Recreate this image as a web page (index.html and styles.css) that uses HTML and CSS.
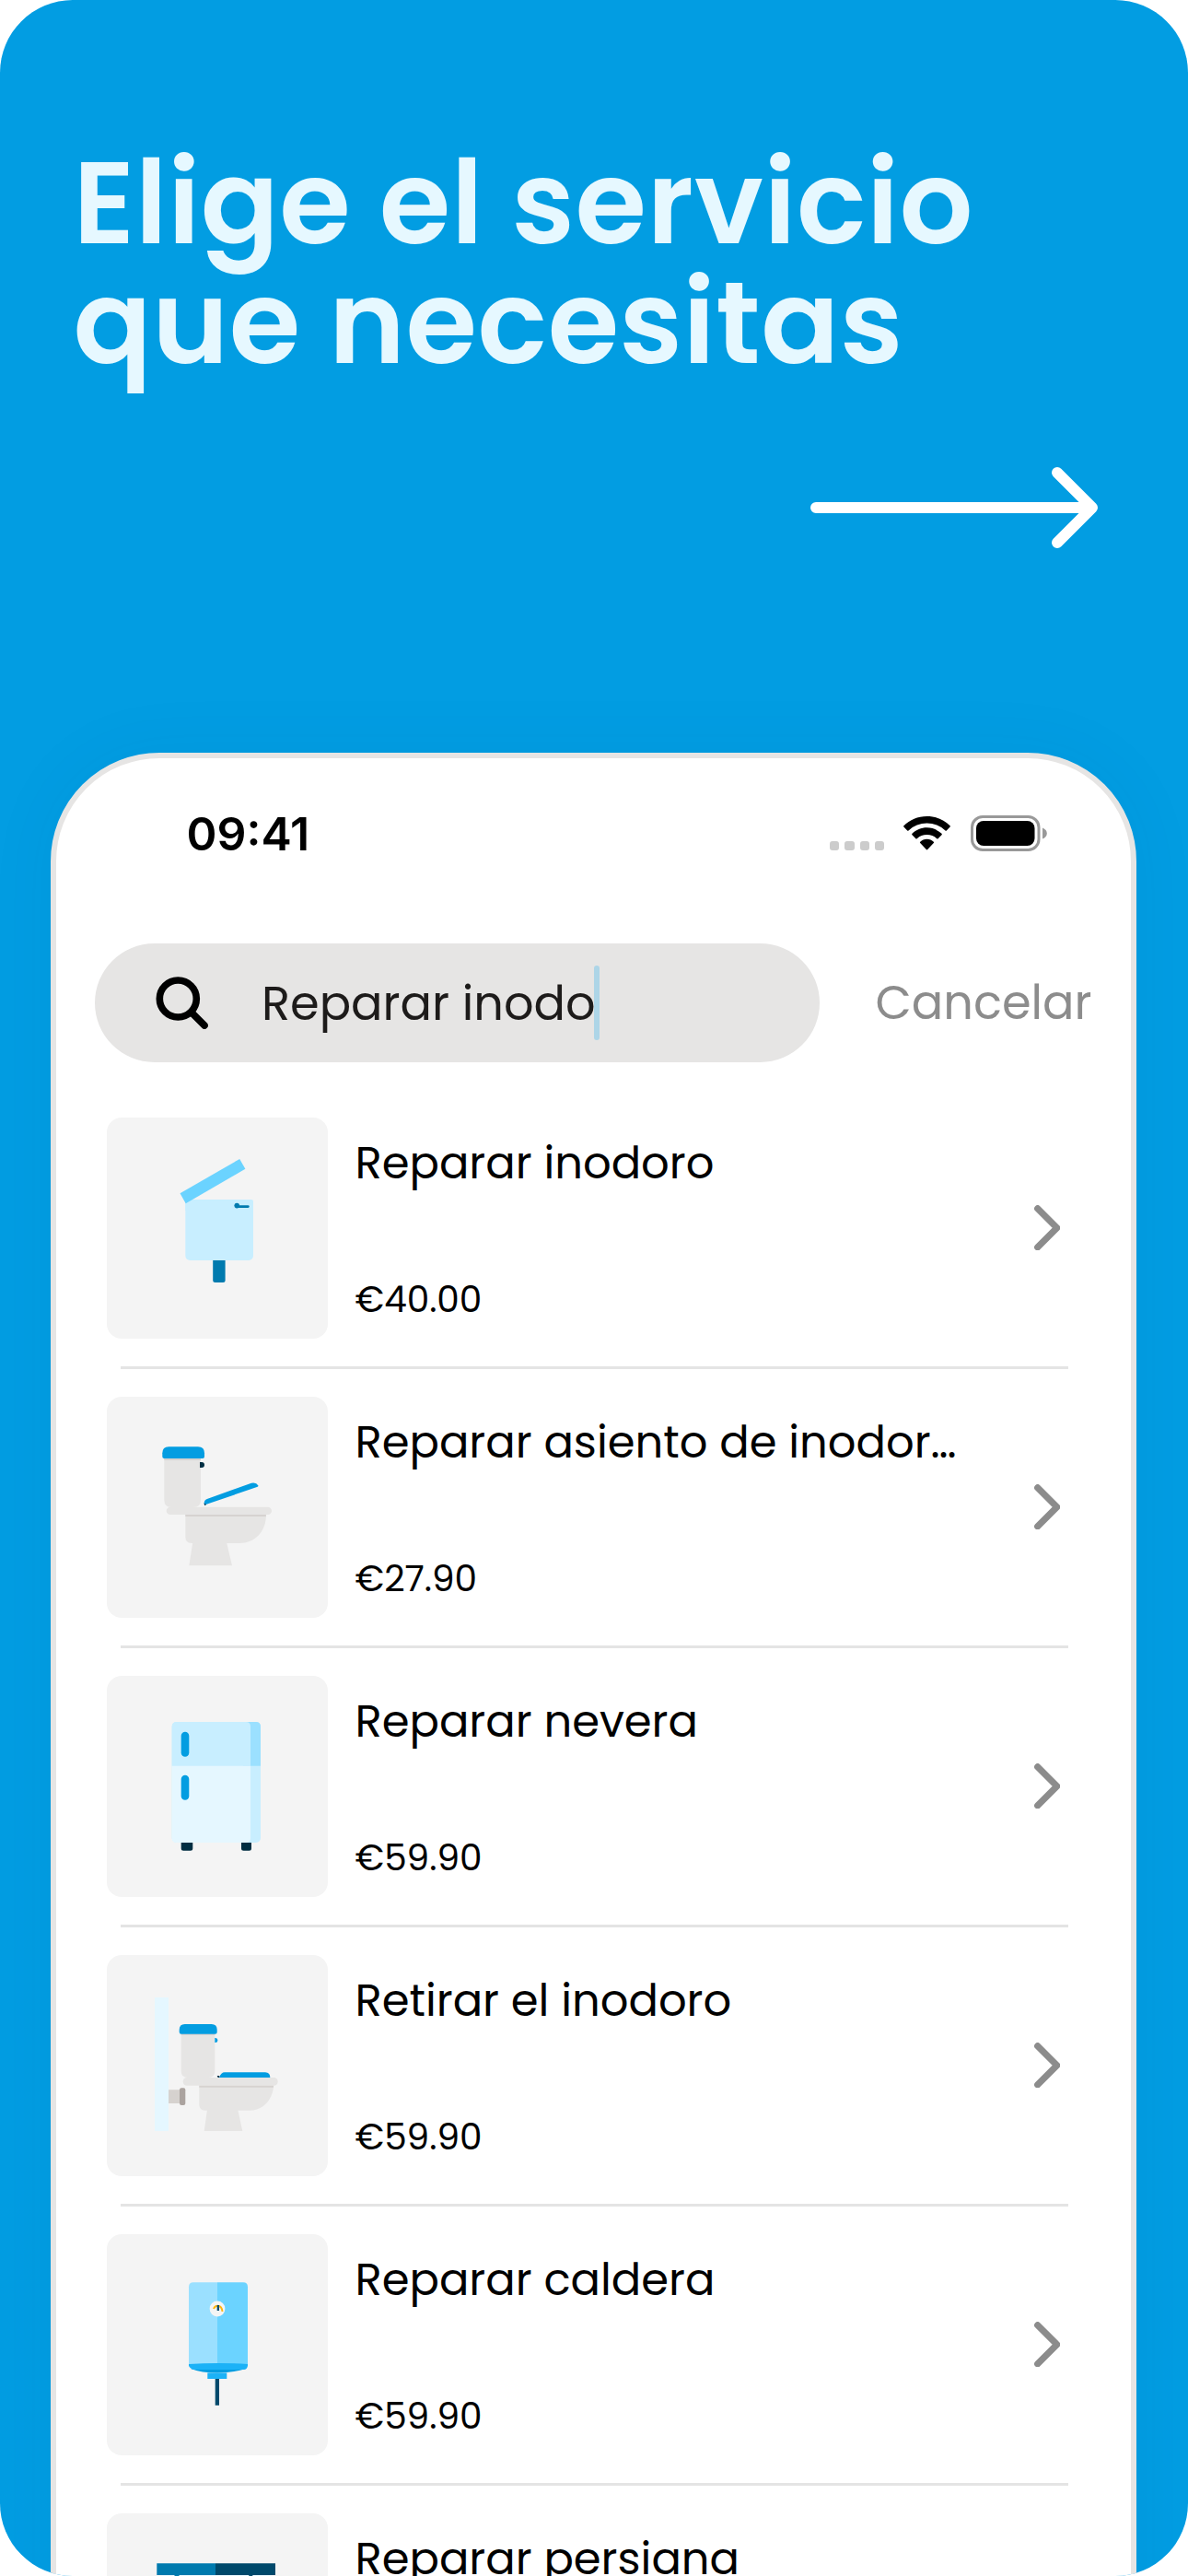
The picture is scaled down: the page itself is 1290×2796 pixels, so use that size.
FILE: index.html
```html
<!DOCTYPE html>
<html lang="es">
<head>
<meta charset="utf-8">
<title>Elige el servicio que necesitas</title>
<link rel="stylesheet" href="styles.css">
</head>
<body>
<main class="poster">
  <h1 class="headline">Elige el servicio<br>que necesitas</h1>
  <svg class="arrow" width="312" height="88" viewBox="0 0 312 88"><path d="M6 44H306M268 6l38 38-38 38"/></svg>

  <section class="phone">
    <header class="status">
      <span class="time">09:41</span>
      <div class="status-icons">
        <div class="dots"><i></i><i></i><i></i><i></i></div>
        <svg class="wifi" width="51" height="37" viewBox="0 0 51 37">
          <path d="M25.500 0C35.500 0 44 3.800 50.600 10.300Q51.200 11 50.600 11.600L46.800 15.400Q46.200 16 45.500 15.400A29.400 29.400 0 0 0 5.500 15.400Q4.800 16 4.200 15.400L.4 11.600Q-.2 11 .4 10.300C7 3.800 15.500 0 25.500 0Z"/>
          <path d="M25.500 12.300C31.700 12.300 37.300 14.800 41.500 18.800Q42.200 19.500 41.500 20.200L37.600 24.200Q37 24.800 36.300 24.200A16 16 0 0 0 14.700 24.200Q14 24.800 13.400 24.200L9.500 20.200Q8.800 19.500 9.500 18.800C13.700 14.800 19.300 12.300 25.500 12.300Z"/>
          <path d="M25.500 24.800C28.300 24.800 30.900 25.900 32.800 27.700Q33.500 28.400 32.800 29.100L26.200 36.100Q25.500 36.800 24.800 36.100L18.200 29.100Q17.500 28.400 18.200 27.700C20.100 25.900 22.700 24.800 25.500 24.800Z"/>
        </svg>
        <svg class="battery" width="83" height="39" viewBox="0 0 83 39">
          <rect x="1.500" y="1.500" width="72.500" height="36" rx="11.500" fill="none" stroke="#999" stroke-width="3"/>
          <rect x="6" y="6" width="63.500" height="27" rx="8"/>
          <path d="M78 13.500Q82.800 15.500 82.800 19.500T78 25.500Z" fill="#999"/>
        </svg>
      </div>
    </header>

    <div class="search-row">
      <div class="search">
        <svg width="57" height="57" viewBox="0 0 57 57"><circle cx="24.300" cy="24" r="20"/><path d="M39 39L53 53"/></svg>
        <span class="query">Reparar inodo</span><span class="caret"></span>
      </div>
      <span class="cancel">Cancelar</span>
    </div>

    <ul class="list">
      <li class="item">
        <svg class="thumb" viewBox="0 0 240 240">
          <rect x="85.300" y="89" width="73.700" height="66" rx="5" fill="#c8eeff"/>
          <path d="M85.300 89H157q2 0 2 2v10H85.300Z" fill="#c8eeff"/>
          <path d="M144.200 45L150.400 55.700 85.700 93.300 79.500 82.300Z" fill="#6bd3ff"/>
          <circle cx="141.200" cy="95.600" r="2.800" fill="#007aae"/>
          <rect x="141" y="95.200" width="13.700" height="2.700" rx="1.300" fill="#007aae"/>
          <path d="M115.200 155h13.400v21.500q0 2.500-2.500 2.500h-8.400q-2.500 0-2.500-2.500Z" fill="#007aae"/>
        </svg>
        <div class="info"><span class="name">Reparar inodoro</span><span class="price">€40.00</span></div>
        <svg class="chevron" viewBox="0 0 28.500 49.500"><path d="M3.700 3.700L24.700 24.700 3.700 45.700"/></svg>
      </li>
      <li class="item">
        <svg class="thumb" viewBox="0 0 240 240">
          <g fill="#e6e5e4">
            <path d="M62.300 66H102V112q0 8-8 8H70.300q-8 0-8-8Z"/>
            <rect x="64.700" y="119.700" width="114.300" height="8.400" rx="4.200"/>
            <path d="M85.300 128H173C173 147 160 159 144 159H92q-6.700 0-6.700-6.700Z"/>
            <path d="M93.300 158H130L136 183.300H89.300Z"/>
          </g>
          <path d="M62.300 67H102v2H62.300ZM85.300 128H172.800v2H85.300Z" fill="#d6d2d0"/>
          <path d="M67.300 54.300H99q7 0 7 7V65q0 2-2 2H62.300q-2 0-2-2V61.300q0-7 7-7Z" fill="#039de1"/>
          <path d="M101 71h2a3 3 0 0 1 0 6h-2Z" fill="#002e42"/>
          <path d="M106 117.600Q104.500 112.500 109.500 110.700L157 93.800Q162 92.500 164.500 96.500 164.500 97.500 163 98Z" fill="#039de1"/>
          <path d="M105.500 115.500l2.500 1.500-1.500 1.200Z" fill="#002e42"/>
        </svg>
        <div class="info"><span class="name">Reparar asiento de inodor…</span><span class="price">€27.90</span></div>
        <svg class="chevron" viewBox="0 0 28.500 49.500"><path d="M3.700 3.700L24.700 24.700 3.700 45.700"/></svg>
      </li>
      <li class="item">
        <svg class="thumb" viewBox="0 0 240 240">
          <path d="M80.700 180H93.300v7.200q0 2.500-2.500 2.500h-7.600q-2.500 0-2.500-2.500ZM146 180h11v7.200q0 2.500-2.500 2.500h-6q-2.500 0-2.500-2.500Z" fill="#002e42"/>
          <rect x="70.700" y="50" width="96.300" height="131" rx="5" fill="#c8eeff"/>
          <path d="M148 50h14q5 0 5 5V97.700H148Z" fill="#9be0ff"/>
          <path d="M75.700 50H151q5 0 5 5V97.700H70.700V55q0-5 5-5Z" fill="#c8eeff"/>
          <path d="M70.700 97.700H156V176q0 5-5 5H75.700q-5 0-5-5Z" fill="#e5f7ff"/>
          <rect x="80.700" y="60.700" width="8.600" height="27" rx="4.300" fill="#039de1"/>
          <rect x="80.700" y="107.700" width="8.600" height="27" rx="4.300" fill="#039de1"/>
        </svg>
        <div class="info"><span class="name">Reparar nevera</span><span class="price">€59.90</span></div>
        <svg class="chevron" viewBox="0 0 28.500 49.500"><path d="M3.700 3.700L24.700 24.700 3.700 45.700"/></svg>
      </li>
      <li class="item">
        <svg class="thumb" viewBox="0 0 240 240">
          <path d="M52 46H67V191H52Z" fill="#e5f7ff"/>
          <path d="M67 146.300H80V161H67Z" fill="#d6d2cf"/>
          <rect x="79" y="144.300" width="6.300" height="18.700" rx="2" fill="#aba39f"/>
          <g fill="#e6e5e4">
            <path d="M80.700 85H117.300V126q0 7-7 7H87.700q-7 0-7-7Z"/>
            <rect x="82.700" y="133" width="103" height="8.700" rx="4.300"/>
            <path d="M100.300 141.600H181.300C180 158 169 168.700 155 168.700H107q-6.700 0-6.700-6.700Z"/>
            <path d="M109 168H142.300L147.300 191H105.700Z"/>
          </g>
          <path d="M80.700 85.500H117.300v1.500H80.700ZM100.300 141.700H181v2H100.300Z" fill="#d6d2d0"/>
          <path d="M84.700 75H113.700q6 0 6 6v2.700q0 2-2 2H80.700q-2 0-2-2V81q0-6 6-6Z" fill="#039de1"/>
          <path d="M117.300 90h.5a2.400 2.400 0 0 1 0 5h-.5Z" fill="#039de1"/>
          <path d="M122 133Q124 127.300 128 127.300H172Q177.300 127.500 177.300 133Z" fill="#039de1"/>
          <path d="M119.700 131h2.500v2h-1.500Z" fill="#002e42"/>
        </svg>
        <div class="info"><span class="name">Retirar el inodoro</span><span class="price">€59.90</span></div>
        <svg class="chevron" viewBox="0 0 28.500 49.500"><path d="M3.700 3.700L24.700 24.700 3.700 45.700"/></svg>
      </li>
      <li class="item">
        <svg class="thumb" viewBox="0 0 240 240">
          <path d="M91 146Q103 150.500 120 150.500T151 146Z" fill="#039de1"/>
          <path d="M89 139H153v3q0 5-5 5H94q-5-2-5-5Z" fill="#1bb2f7"/>
          <path d="M120 52.300H94q-5 0-5 5V141H120Z" fill="#9be0ff"/>
          <path d="M120 52.300H148q5 0 5 5V141H120Z" fill="#6bd3ff"/>
          <path d="M89 141Q120 139 153 141v2H89Z" fill="#1bb2f7"/>
          <path d="M109.300 150.500H130.300V157H109.300Z" fill="#1bb2f7"/>
          <path d="M117.700 157H122V185.700H117.700Z" fill="#00496b"/>
          <circle cx="120" cy="81" r="8.400" fill="#f4f4f4"/>
          <path d="M116 81Q117 77.700 120.500 77.700 125 78 125.500 84" fill="none" stroke="#fbb713" stroke-width="1.900"/>
          <path d="M119.700 77h2.300v6h-2.300Z" fill="#00496b"/>
        </svg>
        <div class="info"><span class="name">Reparar caldera</span><span class="price">€59.90</span></div>
        <svg class="chevron" viewBox="0 0 28.500 49.500"><path d="M3.700 3.700L24.700 24.700 3.700 45.700"/></svg>
      </li>
      <li class="item">
        <svg class="thumb" viewBox="0 0 240 240">
          <path d="M60 67h118v90H60Z" fill="#e5f7ff"/>
          <path d="M54.300 54.300H118V67H54.300ZM73.500 67h5v2h-5Z" fill="#007aae"/>
          <path d="M118 54.300H183V67H118ZM154.300 67h4v2h-4Z" fill="#00496b"/>
        </svg>
        <div class="info"><span class="name">Reparar persiana</span></div>
      </li>
    </ul>
  </section>
</main>
</body>
</html>
```
FILE: styles.css
```css
* { box-sizing: border-box; margin: 0; padding: 0; }

body {
  width: 1290px;
  height: 2796px;
  overflow: hidden;
  background: #fff;
  font-family: Poppins, Inter, "Noto Sans", sans-serif;
  color: #000;
}

.poster {
  display: flex;
  flex-direction: column;
  height: 2796px;
  padding-top: 155px;
  overflow: hidden;
  border-radius: 79px;
  background: #029de2;
}

.headline {
  flex: none;
  height: 352px;
  padding-left: 79.500px;
  font-size: 125.500px;
  font-weight: 600;
  line-height: 130px;
  letter-spacing: .55px;
  color: #e6f8ff;
  white-space: nowrap;
}

.arrow {
  flex: none;
  align-self: flex-end;
  margin-right: 98px;
  fill: none;
  stroke: #fff;
  stroke-width: 12;
  stroke-linecap: round;
  stroke-linejoin: round;
}

.phone {
  flex: none;
  width: 1179px;
  height: 2200px;
  margin: 222px 0 0 55px;
  border: 6px solid #e6e5e4;
  border-radius: 118px;
  background: #fff;
  box-shadow: 0 0 80px rgba(0, 60, 110, .05);
}

.status {
  display: flex;
  justify-content: space-between;
  height: 201px;
  padding: 61px 91px 0 141.500px;
}
.time {
  font-family: Inter, sans-serif;
  font-size: 50px;
  font-weight: 600;
  line-height: 42px;
}
.status-icons { display: flex; height: 40px; }
.dots { display: flex; gap: 6px; padding-top: 29px; margin-right: 21px; }
.dots i { width: 10.200px; height: 10px; border-radius: 3px; background: #ccc; }
.wifi { margin: 2px 22px 0 0; }
.battery { margin-top: 1px; }

.search-row { display: flex; align-items: center; height: 129px; padding-left: 42px; }
.search {
  display: flex;
  align-items: center;
  width: 787px;
  height: 129px;
  padding-left: 66px;
  border-radius: 65px;
  background: #e6e5e4;
}
.search svg {
  margin-right: 58px;
  fill: none;
  stroke: #000;
  stroke-width: 7.600;
  stroke-linecap: round;
}
.query { padding-top: 2px; font-size: 51px; color: #1d1b1a; white-space: nowrap; }
.caret { width: 6px; height: 81px; margin-left: -2px; border-radius: 3px; background: #add5e7; }
.cancel { margin-left: 60.500px; font-size: 51px; color: #8c8c8c; }

.list { padding: 60px 68.500px 0 54.500px; list-style: none; }
.item { position: relative; display: flex; height: 303px; }
.item::after {
  content: "";
  position: absolute;
  left: 15px;
  right: 0;
  top: 270px;
  height: 3px;
  background: #e4e4e4;
}
.thumb { flex: none; width: 240px; height: 240px; border-radius: 16px; background: #f4f4f4; }
.info {
  display: flex;
  flex-direction: column;
  justify-content: space-between;
  flex: 1;
  height: 240px;
  padding: 20px 0 12px 30px;
}
.name { font-size: 48px; line-height: 60px; white-space: nowrap; }
.price { font-size: 39px; line-height: 60px; }
.chevron {
  width: 28.500px;
  height: 49.500px;
  margin: 94.500px 8.500px 0 0;
  fill: none;
  stroke: #8c8c8c;
  stroke-width: 7.200;
  stroke-linecap: round;
  stroke-linejoin: round;
}
```
